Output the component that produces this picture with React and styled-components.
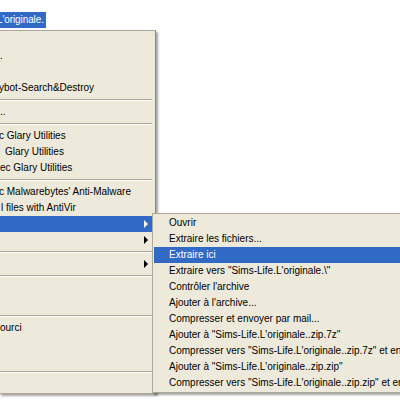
import React from 'react';
import styled, { createGlobalStyle } from 'styled-components';

const mainItems = [
  { text: '' },
  { text: '.', indent: 0 },
  { text: '' },
  { text: 'ybot-Search&Destroy', indent: -1 },
  { sep: true },
  { text: '..', indent: 0 },
  { sep: true },
  { text: 'c Glary Utilities', indent: -1 },
  { text: 'Glary Utilities', indent: 5 },
  { text: 'ec Glary Utilities', indent: 0 },
  { sep: true },
  { text: 'c Malwarebytes\' Anti-Malware', indent: -1 },
  { text: 'l files with AntiVir', indent: 1 },
  { text: '', arrow: true, active: true, sub: true },
  { text: '', arrow: true },
  { sep: true },
  { text: '', arrow: true },
  { sep: true },
  { text: '' },
  { text: '' },
  { sep: true },
  { text: 'ourci', indent: 0 },
  { text: '' },
  { text: '' },
  { sep: true },
  { text: '' },
];

const subItems = [
  'Ouvrir',
  'Extraire les fichiers...',
  'Extraire ici',
  'Extraire vers "Sims-Life.L\'originale.\\"',
  'Contrôler l\'archive',
  'Ajouter à l\'archive...',
  'Compresser et envoyer par mail...',
  'Ajouter à "Sims-Life.L\'originale..zip.7z"',
  'Compresser vers "Sims-Life.L\'originale..zip.7z" et envoyer par mail',
  'Ajouter à "Sims-Life.L\'originale..zip.zip"',
  'Compresser vers "Sims-Life.L\'originale..zip.zip" et envoyer par mail',
];

const App = () => {
  return (
    <>
      <GlobalStyle />
      <Screen>
        <FileName>L'originale.</FileName>
        <Menu>
          {mainItems.map((it, i) =>
            it.sep ? (
              <Separator key={i} />
            ) : (
              <Item key={i} $active={it.active}>
                <Label $indent={it.indent}>{it.text}</Label>
                {it.arrow && <Arrow $light={it.active} />}
                {it.sub && (
                  <SubMenu>
                    {subItems.map((s, j) => (
                      <SubItem key={j} $active={j === 2}>
                        {s}
                      </SubItem>
                    ))}
                  </SubMenu>
                )}
              </Item>
            )
          )}
        </Menu>
      </Screen>
    </>
  );
};

const GlobalStyle = createGlobalStyle`
  html, body {
    margin: 0;
    padding: 0;
    background: #ffffff;
  }
  body {
    font-family: "Liberation Sans", Arial, sans-serif;
    font-size: 10px;
  }
`;

const Screen = styled.div`
  position: relative;
  width: 400px;
  height: 400px;
  overflow: hidden;
  box-sizing: border-box;
  padding-top: 12px;
  background: #ffffff;
`;

const FileName = styled.div`
  width: 46px;
  height: 16px;
  line-height: 16px;
  overflow: hidden;
  white-space: nowrap;
  text-indent: -3px;
  letter-spacing: -0.1px;
  background: #316ac5;
  color: #ffffff;
`;

const Menu = styled.div`
  box-sizing: border-box;
  width: 157px;
  margin: 2px 0 0 -1px;
  padding: 1px 3px 1px 0;
  background: #edeadb;
  border: 1px solid #aca899;
  border-right-color: #8c8a80;
  box-shadow: 2px 2px 2px rgba(0, 0, 0, 0.35);
`;

const Item = styled.div`
  position: relative;
  display: flex;
  align-items: center;
  height: 16px;
  line-height: 16px;
  white-space: nowrap;
  background: ${({ $active }) => ($active ? '#316ac5' : 'transparent')};
  color: ${({ $active }) => ($active ? '#ffffff' : '#000000')};
`;

const Label = styled.span`
  flex: 1;
  overflow: hidden;
  padding-left: ${({ $indent }) => ($indent > 0 ? $indent : 0)}px;
  margin-left: ${({ $indent }) => ($indent < 0 ? $indent : 0)}px;
`;

const Arrow = styled.span`
  width: 0;
  height: 0;
  margin-right: 4px;
  border-left: 4px solid ${({ $light }) => ($light ? '#ffffff' : '#000000')};
  border-top: 4px solid transparent;
  border-bottom: 4px solid transparent;
`;

const Separator = styled.div`
  height: 0;
  margin: 3px 0;
  border-top: 1px solid #aca899;
  border-bottom: 1px solid #ffffff;
`;

const SubMenu = styled.div`
  position: absolute;
  left: 100%;
  top: -3px;
  z-index: 2;
  padding: 1px 3px 1px 1px;
  background: #edeadb;
  border: 1px solid #aca899;
  border-right-color: #8c8a80;
  box-shadow: 2px 2px 2px rgba(0, 0, 0, 0.35);
`;

const SubItem = styled.div`
  height: 16px;
  line-height: 16px;
  padding: 0 20px 0 15px;
  white-space: nowrap;
  background: ${({ $active }) => ($active ? '#316ac5' : 'transparent')};
  color: ${({ $active }) => ($active ? '#ffffff' : '#000000')};
`;

export default App;
